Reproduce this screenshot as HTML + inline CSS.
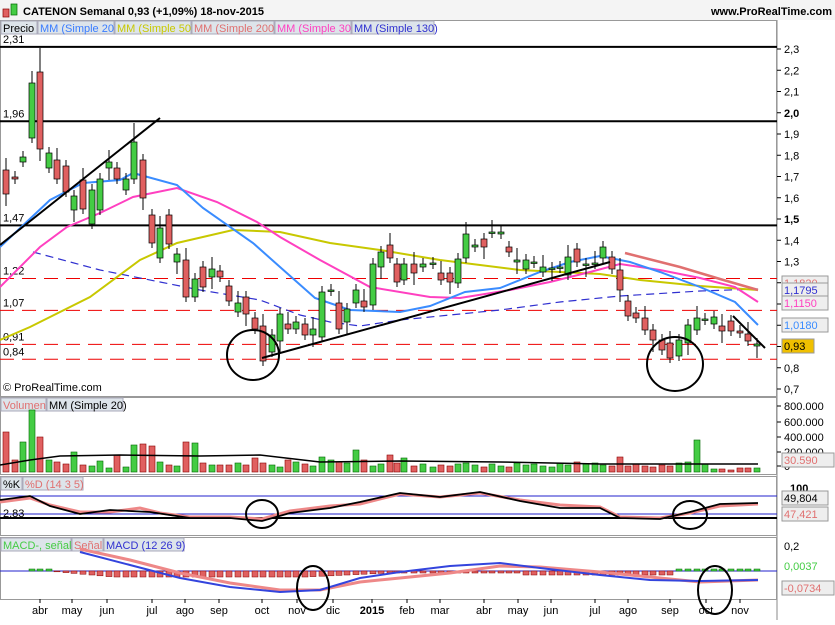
<!DOCTYPE html>
<html><head><meta charset="utf-8"><style>
body{margin:0;background:#fff;width:835px;height:620px;overflow:hidden;font-family:"Liberation Sans",sans-serif}
svg text{font-family:"Liberation Sans",sans-serif;font-size:11px}
</style></head><body>
<svg id="s" width="835" height="620" xmlns="http://www.w3.org/2000/svg">
<rect width="835" height="620" fill="#fff"/>
<rect x="0" y="0" width="835" height="20" fill="#f4f4f4"/>
<rect x="3" y="9" width="6" height="8" fill="#e06060" stroke="#800" stroke-width=".7"/>
<rect x="11" y="4" width="6" height="11" fill="#44cc44" stroke="#060" stroke-width=".7"/>
<text x="23" y="15" font-weight="bold" font-size="12">CATENON   Semanal   0,93 (+1,09%)   18-nov-2015</text>
<text x="832" y="15" text-anchor="end" font-weight="bold" font-size="12">www.ProRealTime.com</text>
<g id="g"></g>
</svg>
<script>
const g=document.getElementById('g');let h='';
const P=p=>49+(2.3-p)*212.5;
function t(x,y,s,c,a,ex){h+=`<text x="${x}" y="${y}" fill="${c||'#000'}" ${a?'text-anchor="'+a+'"':''} ${ex||''}>${s}</text>`}
function pl(pts,c,w,ex){h+=`<polyline fill="none" stroke="${c}" stroke-width="${w}" ${ex||''} points="${pts.map(p=>p.join(',')).join(' ')}"/>`}
h+=`<line x1="777" y1="20" x2="777" y2="620" stroke="#888"/>`;
[[20,396],[397,474],[476,535],[537,599]].forEach(([a,b])=>{h+=`<rect x="0.5" y="${a+.5}" width="776" height="${b-a}" fill="none" stroke="#999"/>`});
let lx=1;[['Precio','#000',36],['MM (Simple 20)','#3a7cff',76],['MM (Simple 50)','#c8c800',76],['MM (Simple 200)','#e07070',82],['MM (Simple 30)','#ff40c0',76],['MM (Simple 130)','#3030d0',82]].forEach(([s,c,w])=>{h+=`<rect x="${lx}" y="21" width="${w}" height="13" fill="#dde4ea" stroke="#aab"/>`;t(lx+2,32,s,c);lx+=w+1});
for(let v=23;v>=7;v--){const y=P(v/10);h+=`<line x1="777" y1="${y}" x2="781" y2="${y}" stroke="#000"/>`;t(784,y+4,(v/10).toFixed(1).replace('.',','),'#000','', (v==20||v==15)?'font-weight="bold"':'')}
[2.31,1.96,1.47].forEach(v=>{h+=`<line x1="0" y1="${P(v)}" x2="777" y2="${P(v)}" stroke="#000" stroke-width="2"/>`});
[1.22,1.07,0.91,0.84].forEach(v=>{h+=`<line x1="0" y1="${P(v)}" x2="777" y2="${P(v)}" stroke="#e00" stroke-width="1" stroke-dasharray="14,8"/>`});
[['2,31',2.31],['1,96',1.96],['1,47',1.47],['1,22',1.22],['1,07',1.07],['0,91',0.91],['0,84',0.84]].forEach(([s,v])=>t(3,P(v)-4,s));
t(3,391,'© ProRealTime.com');
// MAs
pl([[33,252],[100,270],[160,282],[200,290],[260,300],[300,315],[330,322],[360,326],[400,320],[450,315],[500,310],[560,302],[620,296],[700,291],[758,289]],'#3030d0',1.2,'stroke-dasharray="8,5"');
pl([[0,340],[30,327],[90,297],[140,260],[177,243],[233,230],[280,232],[330,243],[380,250],[440,260],[480,265],[520,270],[560,272],[600,274],[640,280],[700,286],[758,290]],'#c8c800',2);
pl([[625,253],[680,267],[720,279],[758,290]],'#e07070',2.5);
pl([[0,287],[40,247],[67,227],[100,213],[133,197],[177,188],[217,202],[257,222],[280,237],[320,260],[370,287],[430,297],[460,298],[510,290],[550,282],[590,272],[620,264],[660,270],[700,278],[735,287],[758,302]],'#ff40c0',2);
pl([[0,247],[50,200],[83,183],[120,180],[133,173],[177,185],[203,208],[253,243],[280,267],[315,298],[350,310],[400,312],[430,306],[465,292],[500,288],[540,272],[570,262],[600,256],[630,262],[660,272],[700,287],[735,302],[758,325]],'#3a8cff',2);
// candles [x, top, bottom, green]
const K=[[6,170,194,0],[15,177,179,0],[23,157,162,1],[32,83,138,1],[40,72,149,0],[49,153,168,1],[57,160,179,0],[66,166,192,0],[74,196,210,1],[83,180,209,0],[92,190,224,1],[100,179,210,1],[109,162,168,1],[117,168,179,0],[126,179,190,1],[134,142,179,1],[143,160,198,0],[152,215,243,0],[160,228,258,1],[169,215,244,0],[177,254,262,1],[186,260,297,0],[195,279,297,1],[203,267,287,0],[212,269,277,1],[220,271,277,0],[229,286,301,0],[238,303,312,1],[246,297,314,0],[255,318,329,0],[263,326,361,0],[272,335,352,1],[280,314,341,1],[288,324,329,0],[296,322,329,1],[305,324,335,0],[313,329,335,1],[322,292,337,1],[331,290,291,1],[339,303,329,0],[347,309,322,1],[356,290,303,1],[364,301,307,0],[373,264,305,1],[381,252,267,1],[390,245,258,0],[397,264,282,0],[404,264,280,1],[414,264,273,0],[423,264,267,1],[433,263,264,1],[441,273,280,0],[450,273,282,0],[458,259,283,1],[466,234,258,1],[475,245,247,1],[484,239,247,0],[492,232,233,1],[501,232,234,1],[509,247,252,0],[517,260,262,1],[526,260,269,1],[534,262,263,1],[543,267,272,1],[552,268,269,1],[560,267,268,1],[568,257,275,1],[577,249,262,0],[586,264,265,1],[595,263,264,1],[603,247,258,1],[612,257,269,0],[620,270,290,0],[628,301,316,0],[636,313,318,0],[645,318,330,0],[653,330,340,0],[662,340,350,0],[670,343,358,0],[679,340,356,1],[688,325,343,1],[697,318,330,1],[705,319,320,1],[714,317,324,1],[722,326,331,0],[731,321,331,0],[740,331,333,0],[748,334,341,0],[757,344,346,1]];
K.forEach(([x,a,b,up],i)=>{const wt=a-(i%3==0?12:6),wb=b+(i%4==0?12:5);h+=`<line x1="${x}" y1="${wt}" x2="${x}" y2="${wb}" stroke="#000"/>`;h+=`<rect x="${x-3}" y="${a}" width="6" height="${Math.max(1.5,b-a)}" fill="${up?'#44cc44':'#e06060'}" stroke="#000" stroke-width=".7"/>`});
h+=`<line x1="40" y1="48" x2="40" y2="72" stroke="#000"/><line x1="134" y1="123" x2="134" y2="142" stroke="#000"/>`;
h+=`<line x1="0" y1="245" x2="160" y2="118" stroke="#000" stroke-width="2"/><line x1="262" y1="358" x2="610" y2="262" stroke="#000" stroke-width="2"/><line x1="733" y1="316" x2="765" y2="348" stroke="#000" stroke-width="2"/>`;
h+=`<ellipse cx="253" cy="355" rx="26" ry="25" fill="none" stroke="#000" stroke-width="2"/><ellipse cx="675" cy="364" rx="28" ry="27" fill="none" stroke="#000" stroke-width="2"/>`;
[[283,'1,1820','#e07070','#eee'],[290,'1,1795','#3030d0','#eee'],[303,'1,1150','#ff40c0','#eee'],[325,'1,0180','#3a8cff','#eee'],[346,'0,93','#000','#f0c000']].forEach(([y,s,c,bg])=>{h+=`<rect x="782" y="${y-7}" width="${s.length*7+4}" height="14" fill="${bg}" stroke="#999"/>`;t(784,y+4,s,c)});
// volume
h+=`<rect x="1" y="398" width="45" height="13" fill="#dde4ea" stroke="#aab"/>`;t(3,409,'Volumen','#e07070');h+=`<rect x="47" y="398" width="76" height="13" fill="#dde4ea" stroke="#aab"/>`;t(49,409,'MM (Simple 20)');
[['800.000',410],['600.000',426],['400.000',441],['200.000',456],['0',470]].forEach(([s,y])=>{h+=`<line x1="777" y1="${y-4}" x2="781" y2="${y-4}" stroke="#000"/>`;t(784,y,s)});
const V=[40,12,30,62,35,12,10,8,20,7,6,11,4,17,5,27,28,26,10,7,6,30,29,9,7,7,7,9,7,14,9,7,5,12,10,8,6,15,12,10,9,22,12,6,8,17,9,14,6,8,5,7,6,8,9,7,5,8,6,5,9,7,8,6,5,9,7,10,8,9,7,6,15,6,8,6,5,7,6,9,10,32,8,3,3,2];
K.forEach(([x,a,b,up],i)=>{const v=V[i]||4;h+=`<rect x="${x-3}" y="${472-v*1.0}" width="6" height="${v*1.0}" fill="${up?'#44cc44':'#e06060'}" stroke="${up?'#060':'#800'}" stroke-width=".6"/>`});
pl([[0,465],[30,460],[60,456],[120,455],[200,456],[260,455],[320,462],[400,461],[500,462],[600,464],[700,464],[758,464]],'#000',1.5);
h+=`<rect x="782" y="453" width="52" height="14" fill="#eee" stroke="#999"/>`;t(784,464,'30.590','#e07070');
// stoch
h+=`<rect x="1" y="477" width="21" height="13" fill="#dde4ea" stroke="#aab"/>`;t(3,488,'%K');h+=`<rect x="23" y="477" width="60" height="13" fill="#dde4ea" stroke="#aab"/>`;t(25,488,'%D (14 3 5)','#e07070');
h+=`<line x1="0" y1="496" x2="777" y2="496" stroke="#22c"/><line x1="0" y1="514" x2="777" y2="514" stroke="#22c"/><line x1="0" y1="518" x2="777" y2="518" stroke="#000" stroke-width="2"/>`;
t(3,517,'2,83');t(790,492,'100','#000','','font-weight="bold"');
pl([[0,502],[30,498],[50,505],[80,512],[110,512],[140,508],[160,513],[190,517],[230,517],[262,519],[290,511],[330,506],[360,504],[400,494],[440,497],[480,493],[520,500],[560,505],[600,507],[620,517],[660,518],[690,513],[720,506],[758,504]],'#e88',3);
pl([[0,500],[30,496],[50,506],[80,514],[110,510],[150,512],[190,518],[230,518],[262,521],[290,513],[330,508],[360,502],[400,493],[440,497],[480,492],[520,501],[560,508],[600,508],[620,518],[660,519],[690,512],[720,504],[758,503]],'#000',1.8);
h+=`<ellipse cx="262" cy="514" rx="16" ry="14" fill="none" stroke="#000" stroke-width="2"/><ellipse cx="690" cy="515" rx="17" ry="14" fill="none" stroke="#000" stroke-width="2"/>`;
h+=`<rect x="782" y="491" width="46" height="14" fill="#eee" stroke="#999"/>`;t(784,502,'49,804');h+=`<rect x="782" y="507" width="46" height="14" fill="#eee" stroke="#999"/>`;t(784,518,'47,421','#e07070');
// macd
h+=`<rect x="1" y="538" width="70" height="13" fill="#dde4ea" stroke="#aab"/>`;t(3,549,'MACD-, señal','#44cc44');h+=`<rect x="72" y="538" width="31" height="13" fill="#dde4ea" stroke="#aab"/>`;t(74,549,'Señal','#e07070');h+=`<rect x="104" y="538" width="80" height="13" fill="#dde4ea" stroke="#aab"/>`;t(106,549,'MACD (12 26 9)','#3030d0');
h+=`<line x1="0" y1="571" x2="777" y2="571" stroke="#22c"/>`;
K.forEach(([x],i)=>{if(x<28)return;let v=i<6?-2:Math.min(6,(i-5)*0.8);if(i>35)v=Math.max(2,6-(i-35)*0.4);if(i>60)v=4;if(i>78)v=-2;h+=`<rect x="${x-3}" y="${v>0?571:571+v}" width="6" height="${Math.abs(v)}" fill="${v>0?'#e06060':'#44cc44'}" stroke="${v>0?'#800':'#060'}" stroke-width=".5"/>`});
pl([[80,549],[130,560],[180,573],[230,583],[280,590],[320,590],[360,582],[400,578],[450,573],[500,566],[540,567],[600,572],[650,577],[700,582],[758,580]],'#e88',3);
pl([[80,552],[130,565],[180,578],[230,587],[280,592],[320,590],[360,578],[400,572],[450,566],[500,563],[540,568],[600,575],[650,580],[700,581],[758,580]],'#3344dd',2);
h+=`<ellipse cx="313" cy="588" rx="16" ry="22" fill="none" stroke="#000" stroke-width="2"/><ellipse cx="715" cy="590" rx="17" ry="24" fill="none" stroke="#000" stroke-width="2"/>`;
t(784,550,'0,2');t(784,570,'0,0037','#44cc44');h+=`<rect x="782" y="581" width="52" height="14" fill="#eee" stroke="#999"/>`;t(784,592,'-0,0734','#e07070');
[['abr',40],['may',72],['jun',107],['jul',152],['ago',185],['sep',219],['oct',262],['nov',297],['dic',333],['2015',372],['feb',407],['mar',440],['abr',484],['may',518],['jun',551],['jul',595],['ago',628],['sep',670],['oct',706],['nov',740]].forEach(([s,x])=>{h+=`<line x1="${x}" y1="599" x2="${x}" y2="603" stroke="#000"/>`;t(x,614,s,'#000','middle',s=='2015'?'font-weight="bold" font-size="12"':'')});
g.innerHTML=h;
</script>
</body></html>
